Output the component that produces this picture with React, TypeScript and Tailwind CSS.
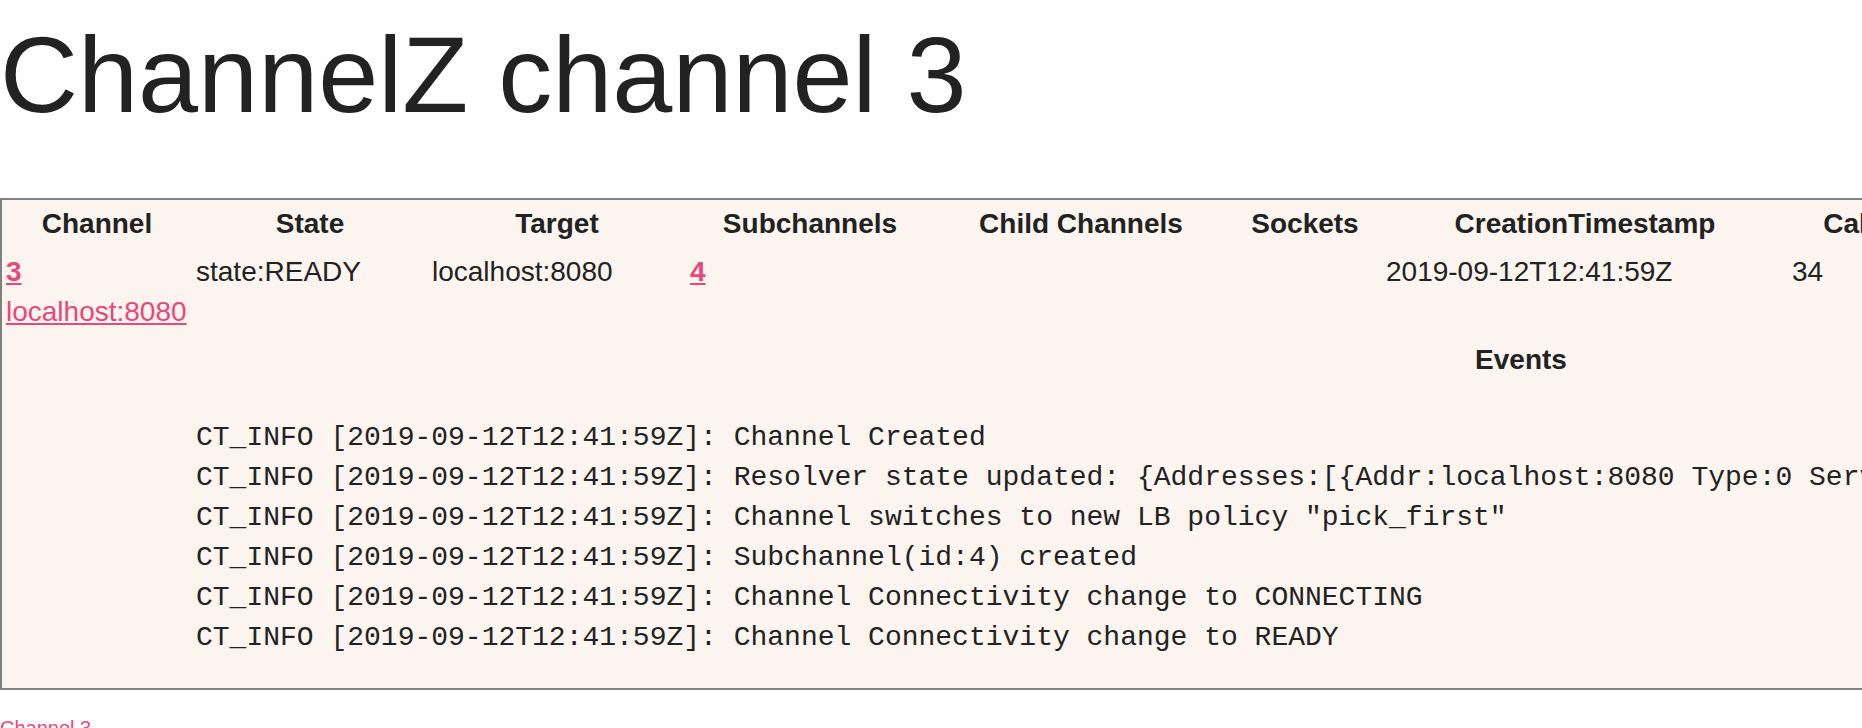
const headers = [
  "Channel",
  "State",
  "Target",
  "Subchannels",
  "Child Channels",
  "Sockets",
  "CreationTimestamp",
  "CallsStarted",
  "CallsSucceeded",
  "CallsFailed",
  "LastCallStartedTimestamp",
];

const events = [
  "CT_INFO [2019-09-12T12:41:59Z]: Channel Created",
  "CT_INFO [2019-09-12T12:41:59Z]: Resolver state updated: {Addresses:[{Addr:localhost:8080 Type:0 ServerName: Metadata:<nil>}] ServiceConfig:<nil> Attributes:<nil>} (resolver returned new addresses)",
  'CT_INFO [2019-09-12T12:41:59Z]: Channel switches to new LB policy "pick_first"',
  "CT_INFO [2019-09-12T12:41:59Z]: Subchannel(id:4) created",
  "CT_INFO [2019-09-12T12:41:59Z]: Channel Connectivity change to CONNECTING",
  "CT_INFO [2019-09-12T12:41:59Z]: Channel Connectivity change to READY",
];

const link = "text-[#e8497a] underline";

export default function App() {
  return (
    <div className="h-screen w-screen overflow-hidden bg-white font-['Liberation_Sans',Arial,sans-serif] text-[#222]">
      <h1 className="mt-[21px] whitespace-nowrap text-[108px] font-normal leading-none">ChannelZ channel 3</h1>

      {/* channel table, wider than the window like the original page */}
      <div className="mt-[69px] w-[2900px] border-2 border-[#808080] bg-[#fcf4ef] px-[4px] pt-[4px] pb-[4px] text-[28px] leading-[40px]">
        <div className="grid grid-cols-[182px_228px_250px_240px_286px_146px_398px_226px_230px_180px_394px] gap-2">
          {headers.map((h) => (
            <div key={h} className="whitespace-nowrap text-center font-bold">
              {h}
            </div>
          ))}

          <div className="whitespace-nowrap">
            <a className={`${link} font-bold`}>3</a>
            <br />
            <a className={link}>localhost:8080</a>
          </div>
          <div className="whitespace-nowrap">state:READY</div>
          <div className="whitespace-nowrap">localhost:8080</div>
          <div>
            <a className={`${link} font-bold`}>4</a>
          </div>
          <div />
          <div />
          <div className="whitespace-nowrap">2019-09-12T12:41:59Z</div>
          <div>34</div>
          <div>34</div>
          <div>0</div>
          <div className="whitespace-nowrap">2019-09-12T12:42:37Z</div>

          <div />
          <div className="col-span-10">
            <div className="text-center font-bold">Events</div>
            <pre className="mt-[38px] mb-[26px] font-['Liberation_Mono','Courier_New',monospace] text-[28px] leading-[40px]">
              {events.join("\n")}
            </pre>
          </div>
        </div>
      </div>

      <div className="mt-[24px] text-[20px] leading-[28px]">
        <a className={link}>Channel 3</a>
      </div>
    </div>
  );
}
